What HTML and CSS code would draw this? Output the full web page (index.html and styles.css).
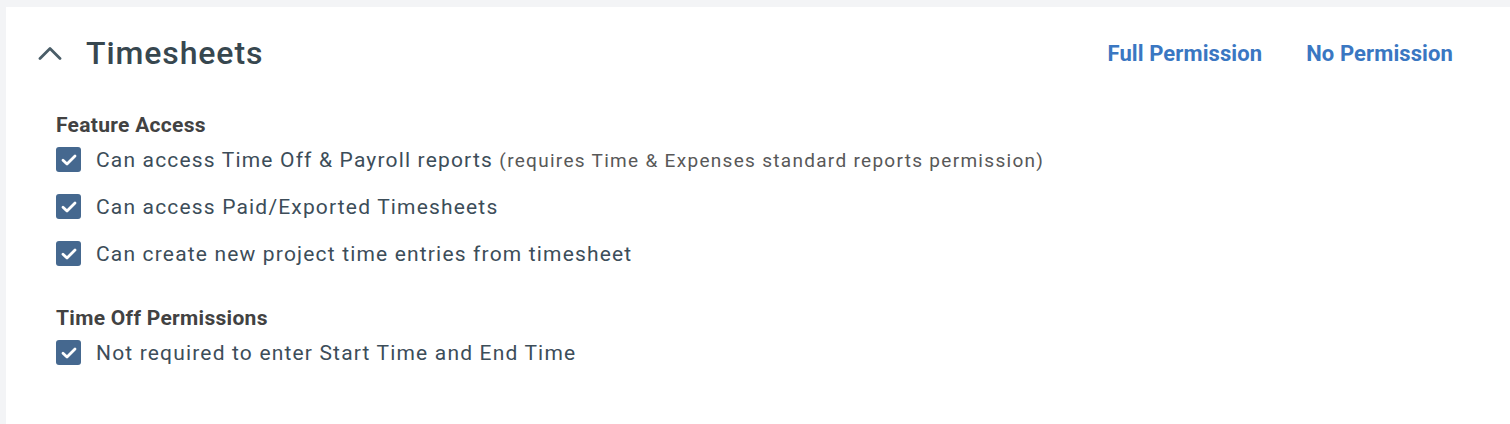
FILE: index.html
```html
<!DOCTYPE html>
<html lang="en">
<head>
<meta charset="UTF-8" />
<title>Timesheets permissions</title>
<link rel="stylesheet" href="styles.css">
</head>
<body>
<div class="card">

  <!-- header -->
  <div class="card-head">
    <button class="toggle" title="Collapse">
      <svg width="24" height="14" viewBox="0 0 24 14"><path d="M2 12.5 L12 2.5 L22 12.5" fill="none" stroke="#4a5d68" stroke-width="2.8" stroke-linecap="round" stroke-linejoin="round"/></svg>
    </button>
    <h2>Timesheets</h2>
    <div class="head-links">
      <a href="#">Full Permission</a>
      <a href="#">No Permission</a>
    </div>
  </div>

  <!-- Feature Access -->
  <div class="group">
    <h3>Feature Access</h3>
    <label class="check">
      <span class="box"><svg width="16" height="12" viewBox="0 0 16 12"><path d="M2 6.2 L6 10 L14 2" fill="none" stroke="#fff" stroke-width="2.8" stroke-linecap="round" stroke-linejoin="round"/></svg></span>
      <span class="txt">Can access Time Off &amp; Payroll reports <small>(requires Time &amp; Expenses standard reports permission)</small></span>
    </label>
    <label class="check">
      <span class="box"><svg width="16" height="12" viewBox="0 0 16 12"><path d="M2 6.2 L6 10 L14 2" fill="none" stroke="#fff" stroke-width="2.8" stroke-linecap="round" stroke-linejoin="round"/></svg></span>
      <span class="txt">Can access Paid/Exported Timesheets</span>
    </label>
    <label class="check">
      <span class="box"><svg width="16" height="12" viewBox="0 0 16 12"><path d="M2 6.2 L6 10 L14 2" fill="none" stroke="#fff" stroke-width="2.8" stroke-linecap="round" stroke-linejoin="round"/></svg></span>
      <span class="txt">Can create new project time entries from timesheet</span>
    </label>
  </div>

  <!-- Time Off Permissions -->
  <div class="group">
    <h3>Time Off Permissions</h3>
    <label class="check">
      <span class="box"><svg width="16" height="12" viewBox="0 0 16 12"><path d="M2 6.2 L6 10 L14 2" fill="none" stroke="#fff" stroke-width="2.8" stroke-linecap="round" stroke-linejoin="round"/></svg></span>
      <span class="txt">Not required to enter Start Time and End Time</span>
    </label>
  </div>

</div>
</body>
</html>
```

FILE: styles.css
```css
html,body{height:100%}
body{background:#f3f4f6;margin:0;padding:7px 0 0 6px;font-family:Roboto,"Noto Sans",Arial,sans-serif;box-sizing:border-box}
.card{background:#fff;min-height:100%;padding:23px 0 40px 50px;box-sizing:border-box}
.card-head{display:flex;align-items:center;height:46px;padding-right:57px}
.toggle{background:none;border:none;padding:0;margin:0 22px 0 -18px;cursor:pointer;display:flex;width:26px}
.card-head h2{margin:0;font-size:32px;font-weight:500;color:#37474f;letter-spacing:.9px;flex:1}
.head-links{display:flex;gap:44px}
.head-links a{color:#3a77c2;font-size:22px;font-weight:700;text-decoration:none;letter-spacing:.1px}
.group{margin-top:38px}
.group + .group{margin-top:30px}
.group h3{margin:0;font-size:21px;line-height:22px;font-weight:700;color:#424242;letter-spacing:.3px}
.check{display:flex;align-items:center;gap:15px;min-height:47px;cursor:pointer}
.box{width:25px;height:25px;border-radius:3px;background:#45688f;display:flex;align-items:center;justify-content:center;flex:none}
.txt{font-size:21px;color:#3c4d59;letter-spacing:1.17px}
.txt small{font-size:19px;color:#585858;letter-spacing:1.3px}
```
